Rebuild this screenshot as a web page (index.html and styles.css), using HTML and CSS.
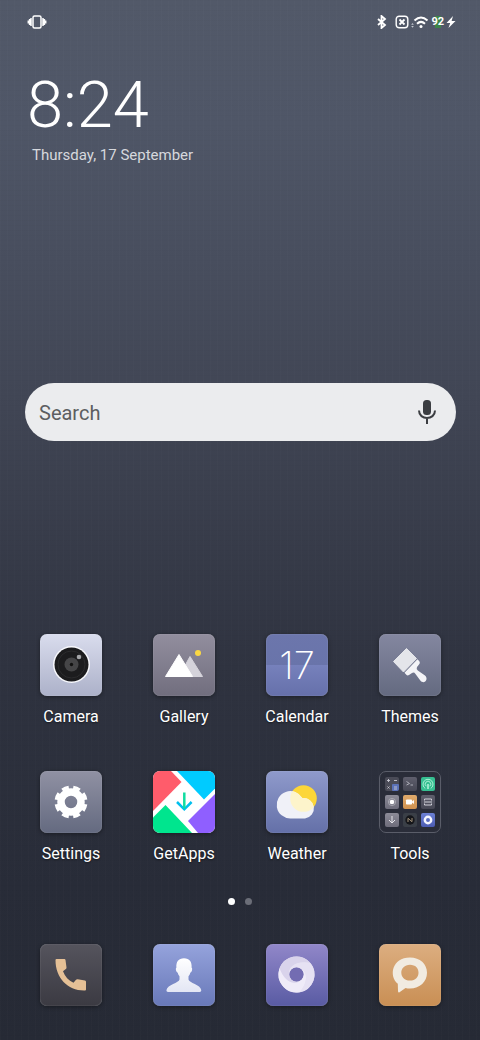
FILE: index.html
```html
<!DOCTYPE html>
<html lang="en">
<head>
  <meta charset="UTF-8">
  <meta name="viewport" content="width=device-width, initial-scale=1.0">
  <title>Home</title>
  <link rel="stylesheet" href="styles.css">
</head>
<body>
  <header class="status-bar">
    <svg class="status-icon" width="20" height="14" viewBox="0 0 20 14" fill="none" stroke="#fff" stroke-width="1.5">
      <rect x="6" y="1" width="8" height="12" rx="1.5"/>
      <path d="M4 3v8M2.600 4v6M1.300 5.500v3M16 3v8M17.400 4v6M18.700 5.500v3"/>
    </svg>
    <div class="status-right">
      <svg class="bluetooth" width="10" height="14" viewBox="0 0 10 14" fill="none" stroke="#fff" stroke-width="1.8">
        <path d="M1 4l7 6-3.500 3V1L8 4l-7 6"/>
      </svg>
      <svg class="no-sim" width="14" height="14" viewBox="0 0 14 14" fill="none" stroke="#fff" stroke-width="1.4">
        <rect x="1.200" y="1.200" width="11.600" height="11.600" rx="3"/>
        <path d="M4.500 4.500l5 5M9.500 4.500l-5 5" stroke-width="1.800"/>
      </svg>
      <svg class="wifi" width="18" height="14" viewBox="0 0 18 14" fill="none" stroke="#fff" stroke-width="2">
        <path d="M3.500 5.500q6.500-6 13 0M6 8.700q4-3.600 8 0"/>
        <circle cx="10" cy="11.500" r="1.500" fill="#fff" stroke="none"/>
        <path d="M1.500 8l1.300 1.800H.2zM1.500 12.800L.2 11h2.600z" fill="#c3c7cf" stroke="none"/>
      </svg>
      <span class="battery">92</span>
      <svg class="bolt" width="10" height="14" viewBox="0 0 10 14" fill="#fff">
        <path d="M7 1L.5 8h3.700L2.500 13 9.500 6H5.600z"/>
      </svg>
    </div>
  </header>

  <main>
    <section class="clock">
      <div class="time">8:24</div>
      <div class="date">Thursday, 17 September</div>
    </section>

    <form class="search">
      <input type="search" placeholder="Search" aria-label="Search">
      <button type="button" class="mic" aria-label="Voice search">
        <svg width="20" height="26" viewBox="0 0 20 26" fill="none" stroke="#3b3d41" stroke-width="2">
          <rect x="6" y="1" width="8" height="15" rx="3.500" fill="#3b3d41" stroke="none"/>
          <path d="M2 11.500c0 10 16 10 16 0M10 19v6"/>
        </svg>
      </button>
    </form>

    <section class="apps">
      <button class="app">
        <span class="tile camera">
          <svg viewBox="0 0 62 62">
            <circle cx="31.500" cy="30.500" r="18.500" fill="#f8f9fd"/>
            <circle cx="31.500" cy="30.500" r="17" fill="#1c1c1e"/>
            <circle cx="31.500" cy="30.500" r="13.500" fill="none" stroke="#2b2b2d"/>
            <circle cx="31.500" cy="30.500" r="7" fill="#454547"/>
            <circle cx="31.500" cy="30.500" r="1.700" fill="#111"/>
            <circle cx="39" cy="23" r="2.300" fill="#a4a5a8"/>
          </svg>
        </span>
        <span class="label">Camera</span>
      </button>
      <button class="app">
        <span class="tile gallery">
          <svg viewBox="0 0 62 62" stroke-linejoin="round">
            <path d="M37 22.500L49.500 42.500H26z" fill="#d5d3db" stroke="#d5d3db"/>
            <path d="M26 20.500L12.500 42.500h27z" fill="#fff" stroke="#fff"/>
            <circle cx="45" cy="19" r="3" fill="#fbd843"/>
          </svg>
        </span>
        <span class="label">Gallery</span>
      </button>
      <button class="app">
        <span class="tile calendar"><span class="day">17</span></span>
        <span class="label">Calendar</span>
      </button>
      <button class="app">
        <span class="tile themes">
          <svg viewBox="0 0 62 62">
            <path d="M27.500 14.500L14.500 27.500 24.500 38 37.500 24.500z" fill="#e4e5ea" stroke="#e4e5ea" stroke-linejoin="round"/>
            <path d="M25.500 38.700L38.500 25.300 40.500 27.500Q41.500 29 40 30.500L38 33Q37 35 38.800 36.500L46 41.500C50 45 45.500 51 41.500 46.800L36.500 40Q35 37.800 33 39L30 41Q28.500 42 27.300 40.700z" fill="#f4f4f7"/>
          </svg>
        </span>
        <span class="label">Themes</span>
      </button>
      <button class="app">
        <span class="tile settings">
          <svg viewBox="0 0 62 62" fill="none" stroke="#fff">
            <circle cx="31" cy="31" r="10" stroke-width="7.500"/>
            <circle cx="31" cy="31" r="14.800" stroke-width="3.400" pathLength="16" stroke-dasharray="1.200 .8" stroke-dashoffset="-.4"/>
          </svg>
        </span>
        <span class="label">Settings</span>
      </button>
      <button class="app">
        <span class="tile getapps">
          <svg viewBox="0 0 62 62">
            <path d="M0 0H18L28.500 11 0 40z" fill="#ff5c6b"/>
            <path d="M24 0H62V17.500L51 28.500z" fill="#00cbff"/>
            <path d="M62 23V62H45L35 50z" fill="#8f5fff"/>
            <path d="M12.500 34L0 46.500V62H39z" fill="#00e58e"/>
            <path d="M24 31l7.300 7.300L38.600 31" fill="none" stroke="#00bfee" stroke-width="2.500"/>
            <path d="M31.300 21.500v16" stroke="#10dda0" stroke-width="2.500"/>
          </svg>
        </span>
        <span class="label">GetApps</span>
      </button>
      <button class="app">
        <span class="tile weather">
          <svg viewBox="0 0 62 62">
            <defs>
              <clipPath id="sun"><circle cx="37.500" cy="27.500" r="13.300"/></clipPath>
              <path id="cloud" d="M24.500 47.500a13.700 13.700 0 1 1 11.800-20.400A10.200 10.200 0 1 1 39 47.500z"/>
            </defs>
            <circle cx="37.500" cy="27.500" r="13.300" fill="#fcd638"/>
            <use href="#cloud" fill="#f0f1f8"/>
            <use href="#cloud" fill="#fdf4cb" clip-path="url(#sun)"/>
          </svg>
        </span>
        <span class="label">Weather</span>
      </button>
      <button class="app">
        <span class="tile tools">
          <span class="mini dark">
            <svg viewBox="0 0 14 14">
              <rect x="7" y="7" width="7" height="7" rx="1" fill="#5b72b8"/>
              <path d="M2 3.500h3M3.500 2v3M9 3.500h3M2.500 9.500l2 2M4.500 9.500l-2 2M9 10h3M9 12h3" stroke="#c9cad2" stroke-width=".9"/>
            </svg>
          </span>
          <span class="mini slate">
            <svg viewBox="0 0 14 14" fill="none" stroke="#b7b8c2"><path d="M3.500 4.500L6.500 6.500l-3 1.500M7.500 8h2.500" stroke-width=".9"/></svg>
          </span>
          <span class="mini green">
            <svg viewBox="0 0 14 14" fill="none" stroke="#b9f5dc" stroke-width=".9">
              <path d="M4.300 11.500a5 5 0 1 1 5.400 0M5.200 9.200a2.800 2.800 0 1 1 3.600 0"/>
              <path d="M7 7v5" stroke-width="1.500"/>
            </svg>
          </span>
          <span class="mini gray">
            <svg viewBox="0 0 14 14"><circle cx="7" cy="7" r="3.600" fill="none" stroke="#c3c3ca" stroke-width=".6"/><circle cx="7" cy="7" r="2.300" fill="#fff"/></svg>
          </span>
          <span class="mini orange">
            <svg viewBox="0 0 14 14" fill="#fff"><rect x="3" y="4.500" width="6" height="5" rx=".8"/><path d="M9 6.500l2-1.500v4L9 7.500z"/></svg>
          </span>
          <span class="mini slate">
            <svg viewBox="0 0 14 14" fill="none" stroke="#d2d2da"><path d="M3.500 5.500V4h7v1.500M3.500 8.500V10h7V8.500M3 7h8"/></svg>
          </span>
          <span class="mini gray">
            <svg viewBox="0 0 14 14" fill="none" stroke="#e6e6eb"><path d="M7 3v6.500M4 7l3 3 3-3"/></svg>
          </span>
          <span class="mini charcoal">
            <svg viewBox="0 0 14 14"><circle cx="7" cy="7" r="4.700" fill="#15161a"/><path d="M5 9V5.300L9 8.700V5" fill="none" stroke="#a08f78"/></svg>
          </span>
          <span class="mini blue">
            <svg viewBox="0 0 14 14"><circle cx="7" cy="7" r="3.200" fill="none" stroke="#f5f6ff" stroke-width="2.400"/></svg>
          </span>
        </span>
        <span class="label">Tools</span>
      </button>
    </section>

    <div class="pages">
      <span class="dot active"></span>
      <span class="dot"></span>
    </div>
  </main>

  <nav class="dock">
    <button class="app" aria-label="Phone">
      <span class="tile phone">
        <svg viewBox="0 0 62 62">
          <path d="M16.500 15H24.500Q25.300 15 25.500 16L26.500 23.500Q26.500 24.500 25.800 25L23 27.200C25 32.500 28.500 36.500 33.500 38.800L36 35.800Q36.700 35 37.700 35.200L45 36.500Q46 36.800 46 37.800V45.500Q46 46.500 45 46.500C28 47 15.500 34 15.500 16Q15.500 15 16.500 15z" fill="#e5c096"/>
        </svg>
      </span>
    </button>
    <button class="app" aria-label="Contacts">
      <span class="tile contacts">
        <svg viewBox="0 0 62 62">
          <defs>
            <linearGradient id="person" x2="0" y2="1"><stop stop-color="#fff"/><stop offset="1" stop-color="#e3e6f4"/></linearGradient>
          </defs>
          <path d="M31 14.300C36.500 14.300 39 18 38.600 23.500Q39.600 24.500 39 26.500 38.400 28.600 37.300 28.700 36.800 30.800 35.500 32.300V35.500C36 39 47.500 40.500 48.300 46.200Q48.300 48 46.700 48H15Q13.400 48 13.400 46.200C14.500 40.500 26 39 26.500 35.500V32.300Q25.200 30.800 24.700 28.700 23.600 28.600 23 26.500 22.400 24.500 23.400 23.500C23 18 25.500 14.300 31 14.300z" fill="url(#person)"/>
        </svg>
      </span>
    </button>
    <button class="app" aria-label="Browser">
      <span class="tile browser">
        <svg viewBox="0 0 62 62">
          <defs>
            <path id="blade" d="M0-7C9-8 14 2 9 15.600A18 18 0 0 1-18 0C-8.700 11.100 2.400 11.800 6.100 3.500A7 7 0 0 0 0-7z"/>
          </defs>
          <g transform="translate(30.500 30.500)">
            <circle r="12.500" fill="none" stroke="#e6e1f3" stroke-width="11"/>
            <use href="#blade" fill="#efebf8" transform="rotate(20)"/>
            <use href="#blade" fill="#d9d3eb" transform="rotate(140)"/>
            <use href="#blade" fill="#e6e1f3" transform="rotate(260)"/>
            <circle r="7" fill="#736cb2"/>
          </g>
        </svg>
      </span>
    </button>
    <button class="app" aria-label="Messages">
      <span class="tile messages">
        <svg viewBox="0 0 62 62">
          <path fill-rule="evenodd" d="M31 13.500C41 13.500 48 20 48 28.700S41 44.500 31 44.500Q28.500 44.500 26.500 44L20.500 48.200Q19 49 19 47L18.800 39.800C9.500 32 13 13.500 31 13.500zM31 20.800C25.500 20.800 22.300 24.500 22.300 28.700S25.500 36.500 31 36.500 39.500 33 39.500 28.700 36.500 20.800 31 20.800z" fill="#f1ebe1"/>
        </svg>
      </span>
    </button>
  </nav>
</body>
</html>
```

FILE: styles.css
```css
* {
  box-sizing: border-box;
}

body {
  margin: 0;
  min-height: 100vh;
  display: flex;
  flex-direction: column;
  font-family: Roboto, "Liberation Sans", sans-serif;
  color: #fff;
  /* faint linen weave over the slate gradient */
  background:
    repeating-linear-gradient(90deg, rgba(255, 255, 255, 0.01) 0 1px, transparent 1px 7px),
    repeating-linear-gradient(rgba(0, 0, 0, 0.015) 0 1px, transparent 1px 5px),
    linear-gradient(#525969 0%, #4f5667 12%, #414655 38%, #2f3340 64%, #282c38 85%, #262a35 100%);
}

button {
  border: 0;
  padding: 0;
  background: none;
  color: inherit;
  font: inherit;
  cursor: pointer;
}

svg {
  display: block;
}

/* status bar */
.status-bar {
  display: flex;
  justify-content: space-between;
  align-items: center;
  height: 44px;
  padding: 0 24px 0 27px;
}

.status-right {
  display: flex;
  align-items: center;
}

.no-sim {
  margin-left: 8px;
}

.wifi {
  margin-left: 2px;
}

.battery {
  margin: 0 2px 0 2px;
  font-size: 11px;
  font-weight: 700;
  line-height: 14px;
  background: linear-gradient(#3c8549, #3c8549) center / 6px 12px no-repeat;
}

/* clock */
.clock {
  padding: 24px 28px 0 27px;
}

.time {
  font-size: 65px;
  font-weight: 300;
  line-height: 74px;
}

.date {
  margin-top: 2px;
  padding-left: 5px;
  font-size: 15px;
  line-height: 22px;
  color: #d6d8dd;
}

/* search */
.search {
  display: flex;
  align-items: center;
  height: 58px;
  margin: 217px 24px 0 25px;
  padding: 0 19px 0 14px;
  border-radius: 29px;
  background: #ebecee;
}

.search input {
  flex: 1;
  min-width: 0;
  height: 30px;
  border: 0;
  padding: 2px 0 0;
  outline: 0;
  background: none;
  font: 20px/28px Roboto, "Liberation Sans", sans-serif;
  color: #5c5e61;
}

.search input::placeholder {
  color: #5c5e61;
  opacity: 1;
}

/* app grid */
.apps,
.dock {
  display: grid;
  grid-template-columns: repeat(4, 62px);
  justify-content: space-between;
  padding: 0 39px 0 40px;
}

.apps {
  margin-top: 193px;
  row-gap: 43px;
}

.app {
  display: flex;
  flex-direction: column;
  align-items: center;
}

.tile {
  display: block;
  width: 62px;
  height: 62px;
  border-radius: 7px;
  overflow: hidden;
  box-shadow: 0 1px 4px rgba(0, 0, 0, 0.4), inset 0 0 1px rgba(255, 255, 255, 0.5);
}

.label {
  margin-top: 10px;
  font-size: 16px;
  line-height: 22px;
  white-space: nowrap;
  text-shadow: 0 1px 2px rgba(0, 0, 0, 0.5);
}

.camera { background: linear-gradient(#d9dced, #acb1c9); }
.gallery { background: linear-gradient(#928e9e, #716e7e); }
.themes { background: linear-gradient(#8487a0, #646a80); }
.settings { background: linear-gradient(#9091a3, #646a80); }
.getapps { background: #fff; }
.weather { background: linear-gradient(#8f9acb, #6470a8); }
.phone { background: linear-gradient(#55545d, #3b3a42); }
.contacts { background: linear-gradient(#95a3dc, #6878b8); }
.browser { background: linear-gradient(#9187c9, #595ba3); }
.messages { background: linear-gradient(#dcae80, #c98f54); }

.calendar {
  display: flex;
  align-items: center;
  justify-content: center;
  background: linear-gradient(#6c76ac 0%, #6974aa 50%, #7681bc 50%, #6670aa 100%);
}

.day {
  font-family: Inter, Roboto, sans-serif;
  font-size: 38px;
  font-weight: 200;
  line-height: 62px;
}

/* tools folder */
.tools {
  display: grid;
  grid-template-columns: repeat(3, 14px);
  gap: 4px;
  place-content: center;
  border: 1px solid #5a5d69;
  background: #2a2d39;
  box-shadow: none;
}

.mini {
  height: 14px;
  border-radius: 2px;
  overflow: hidden;
}

.dark { background: #4a4b57; }
.slate { background: linear-gradient(#5f5f6d, #464754); }
.green { background: #36bf91; }
.gray { background: linear-gradient(#8c8b97, #6e6d7b); }
.orange { background: linear-gradient(#dfa96b, #d09250); }
.charcoal { background: #3a3f47; }
.blue { background: linear-gradient(#6c80d4, #4c5cb3); }

/* page dots */
.pages {
  display: flex;
  justify-content: center;
  gap: 10px;
  margin-top: 33px;
}

.dot {
  width: 7px;
  height: 7px;
  border-radius: 50%;
  background: #6b6e78;
}

.dot.active {
  background: #fff;
}

.dock {
  margin-top: auto;
  padding-bottom: 34px;
}
```
